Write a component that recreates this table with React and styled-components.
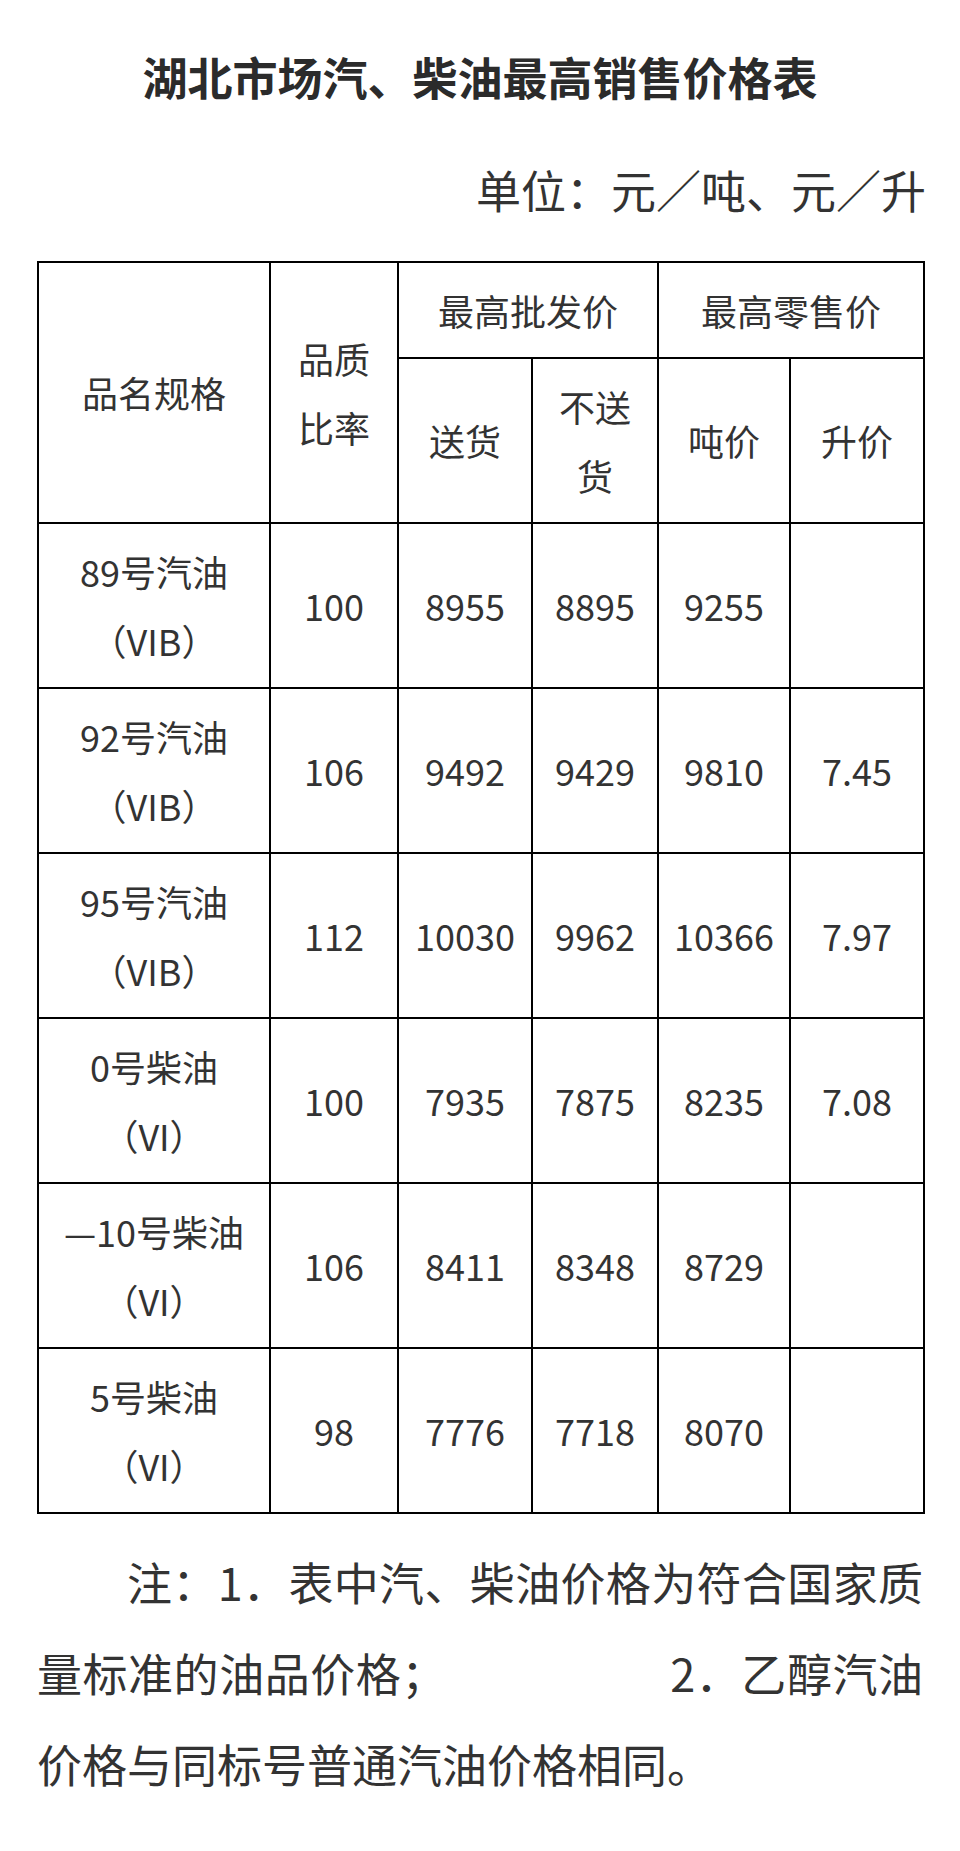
import React from 'react'
import styled, { createGlobalStyle } from 'styled-components'

const GlobalStyle = createGlobalStyle`
    body {
        margin: 0;
        background: #ffffff;
        font-family: "Noto Sans CJK SC", "Noto Sans", sans-serif;
        color: #333333;
    }
`

const Page = styled.div`
    width: 960px;
    box-sizing: border-box;
    padding: 32px 37px 40px;
`

const Title = styled.h1`
    margin: 0;
    font-size: 45px;
    font-weight: 700;
    line-height: 90px;
    text-align: center;
    color: #2b2b2b;
`

const Unit = styled.div`
    margin-top: 23px;
    font-size: 45px;
    line-height: 90px;
    text-align: right;
    margin-right: -3px;
`

const PriceTable = styled.table`
    margin-top: 26px;
    width: 100%;
    border-collapse: collapse;
    table-layout: fixed;
`

const Col = styled.col`
    width: ${props => props.$w}px;
`

const Row = styled.tr`
    height: ${props => props.$h}px;
`

const HeadCell = styled.th`
    border: 2px solid #000;
    padding: 0;
    font-size: 36px;
    font-weight: 400;
    line-height: 69px;
    text-align: center;
    vertical-align: middle;
`

const Cell = styled.td`
    border: 2px solid #000;
    padding: 0;
    font-size: 36px;
    line-height: 69px;
    text-align: center;
    vertical-align: middle;
`

const Note = styled.p`
    margin: 22px 0 0;
    font-size: 45px;
    line-height: 91px;
    text-indent: 2em;
    text-align: justify;
`

const Gap = styled.span`
    display: inline-block;
    width: ${props => props.$w}px;
    text-indent: 0;
`

const columns = [232, 128, 134, 126, 132, 134]

const rows = [
    { name: '89号汽油', spec: '（VIB）', ratio: '100', deliver: '8955', pickup: '8895', ton: '9255', litre: '' },
    { name: '92号汽油', spec: '（VIB）', ratio: '106', deliver: '9492', pickup: '9429', ton: '9810', litre: '7.45' },
    { name: '95号汽油', spec: '（VIB）', ratio: '112', deliver: '10030', pickup: '9962', ton: '10366', litre: '7.97' },
    { name: '0号柴油', spec: '（VI）', ratio: '100', deliver: '7935', pickup: '7875', ton: '8235', litre: '7.08' },
    { name: '—10号柴油', spec: '（VI）', ratio: '106', deliver: '8411', pickup: '8348', ton: '8729', litre: '' },
    { name: '5号柴油', spec: '（VI）', ratio: '98', deliver: '7776', pickup: '7718', ton: '8070', litre: '' },
]

function App() {
  return (
    <Page>
        <GlobalStyle />
        <Title>湖北市场汽、柴油最高销售价格表</Title>
        <Unit>单位：元／吨、元／升</Unit>
        <PriceTable>
            <colgroup>
                {columns.map((w, i) => <Col key={i} $w={w} />)}
            </colgroup>
            <thead>
                <Row $h={96}>
                    <HeadCell rowSpan={2}>品名规格</HeadCell>
                    <HeadCell rowSpan={2}>品质<br />比率</HeadCell>
                    <HeadCell colSpan={2}>最高批发价</HeadCell>
                    <HeadCell colSpan={2}>最高零售价</HeadCell>
                </Row>
                <Row $h={165}>
                    <HeadCell>送货</HeadCell>
                    <HeadCell>不送<br />货</HeadCell>
                    <HeadCell>吨价</HeadCell>
                    <HeadCell>升价</HeadCell>
                </Row>
            </thead>
            <tbody>
                {rows.map(row => (
                    <Row $h={165} key={row.name}>
                        <Cell>{row.name}<br />{row.spec}</Cell>
                        <Cell>{row.ratio}</Cell>
                        <Cell>{row.deliver}</Cell>
                        <Cell>{row.pickup}</Cell>
                        <Cell>{row.ton}</Cell>
                        <Cell>{row.litre}</Cell>
                    </Row>
                ))}
            </tbody>
        </PriceTable>
        <Note>
            注：1．表中汽、柴油价格为符合国家质量标准的油品价格；<Gap $w={224} />2．乙醇汽油价格与同标号普通汽油价格相同。
        </Note>
    </Page>
  )
}

export default App
